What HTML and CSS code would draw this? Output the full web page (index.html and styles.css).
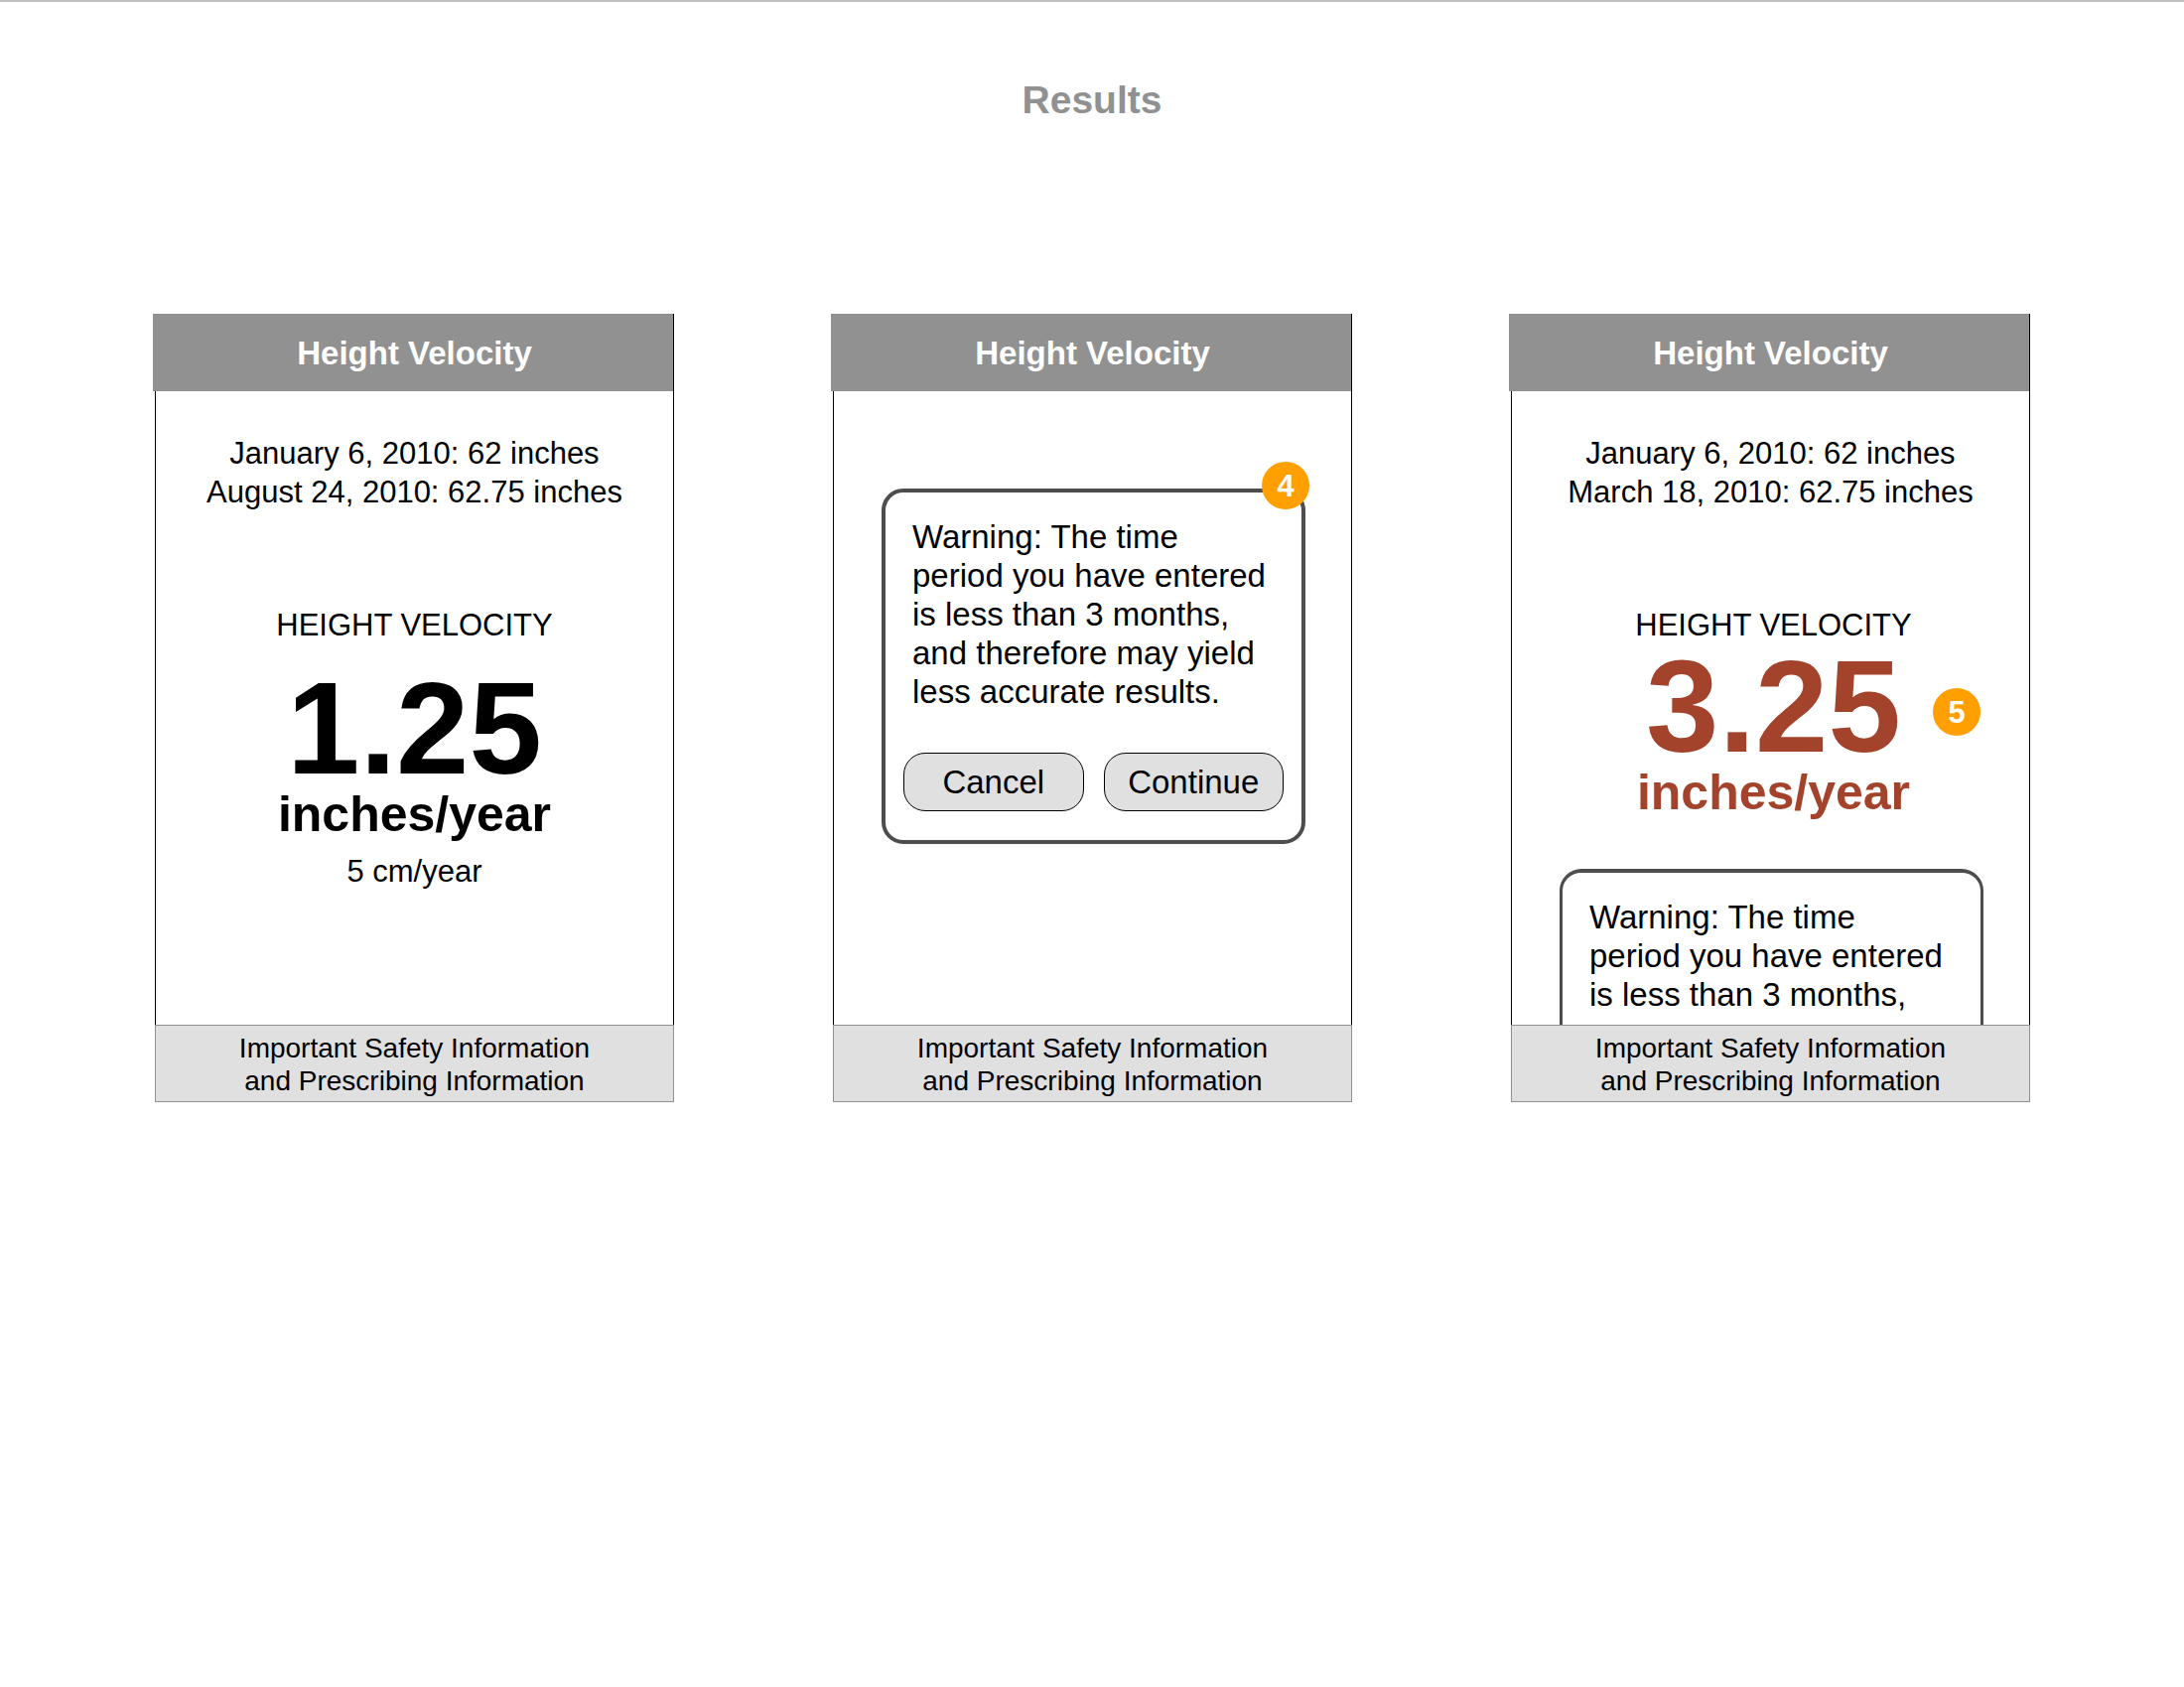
FILE: index.html
```
<!DOCTYPE html>
<html lang="en">
<head>
    <meta charset="UTF-8">
    <meta name="viewport" content="width=device-width, initial-scale=1.0">
    <title>Results</title>
    <link rel="stylesheet" href="styles.css">
</head>
<body>

    <header class="page-header">
        <h1>Results</h1>
    </header>

    <main class="screens">
        <!-- Normal result -->
        <section class="screen">
            <h2 class="screen-title">Height Velocity</h2>
            <div class="screen-body">
                <p class="dates">January 6, 2010: 62 inches<br>August 24, 2010: 62.75 inches</p>
                <div class="reading">
                    <h3>HEIGHT VELOCITY</h3>
                    <div class="value">1.25</div>
                    <div class="unit">inches/year</div>
                    <div class="metric">5 cm/year</div>
                </div>
            </div>
            <footer class="screen-footer">
                <a href="#safety">Important Safety Information<br>and Prescribing Information</a>
            </footer>
        </section>

        <!-- Warning dialog -->
        <section class="screen">
            <h2 class="screen-title">Height Velocity</h2>
            <div class="screen-body">
                <div class="dialog">
                    <p>Warning: The time<br>period you have entered<br>is less than 3 months,<br>and therefore may yield<br>less accurate results.</p>
                    <div class="dialog-buttons">
                        <button type="button">Cancel</button>
                        <button type="button">Continue</button>
                    </div>
                    <span class="badge badge-corner">4</span>
                </div>
            </div>
            <footer class="screen-footer">
                <a href="#safety">Important Safety Information<br>and Prescribing Information</a>
            </footer>
        </section>

        <!-- Result shown after the warning -->
        <section class="screen">
            <h2 class="screen-title">Height Velocity</h2>
            <div class="screen-body">
                <p class="dates">January 6, 2010: 62 inches<br>March 18, 2010: 62.75 inches</p>
                <div class="reading reading-alert">
                    <h3>HEIGHT VELOCITY</h3>
                    <div class="value">3.25</div>
                    <div class="unit">inches/year</div>
                    <span class="badge badge-side">5</span>
                </div>
                <div class="dialog dialog-peek">
                    <p>Warning: The time<br>period you have entered<br>is less than 3 months,</p>
                </div>
            </div>
            <footer class="screen-footer">
                <a href="#safety">Important Safety Information<br>and Prescribing Information</a>
            </footer>
        </section>
    </main>

</body>
</html>
```

FILE: styles.css
```
* {
    box-sizing: border-box;
}
body {
    margin: 0;
    font-family: "Liberation Sans", Arial, sans-serif;
    background-color: #fff;
    color: #000;
}
h1, h2, h3, p {
    margin: 0;
}
.page-header {
    border-top: 2px solid #c0c0c0;
    padding-top: 77px;
    text-align: center;
}
.page-header h1 {
    font-size: 39px;
    line-height: 44px;
    color: #919191;
}
.screens {
    display: grid;
    grid-template-columns: repeat(3, 1fr);
    gap: 160px;
    padding: 193px 155px 0 156px;
}
.screen {
    display: flex;
    flex-direction: column;
    border: solid #000;
    border-width: 0 1px;
}
/* the title bar hangs over the left edge of the screen */
.screen-title {
    margin-left: -3px;
    padding: 20px 0 19px 3px;
    background-color: #919191;
    color: #fff;
    font-size: 33px;
    line-height: 39px;
    text-align: center;
}
.screen-body {
    display: flex;
    flex-direction: column;
    flex: 1;
    min-height: 638px;
}
.dates {
    padding-top: 43px;
    font-size: 31px;
    line-height: 39px;
    text-align: center;
}
.reading {
    position: relative;
    margin-top: 95px;
    text-align: center;
}
.reading h3, .metric {
    font-size: 31px;
    font-weight: normal;
    line-height: 39px;
}
.value {
    margin-top: 22px;
    font-size: 132px;
    font-weight: bold;
    line-height: 126px;
}
.unit {
    font-size: 50px;
    font-weight: bold;
    line-height: 47px;
}
.metric {
    margin-top: 14px;
}
.reading-alert {
    padding-left: 6px;
}
.reading-alert .value {
    margin-top: 0;
}
.reading-alert .value, .reading-alert .unit {
    color: #a4432b;
}
.dialog {
    position: relative;
    margin: 98px 46px 0 48px;
    padding: 25px 18px 29px;
    border: 4px solid #4d4d4d;
    border-radius: 22px;
}
.dialog p {
    padding-left: 9px;
    font-size: 33px;
    line-height: 39px;
}
.dialog-buttons {
    display: flex;
    gap: 20px;
    margin-top: 42px;
}
.dialog-buttons button {
    flex: 1;
    padding: 9px 0;
    border: 1px solid #000;
    border-radius: 22px;
    background-color: #e0e0e0;
    color: #000;
    font-family: inherit;
    font-size: 33px;
    line-height: 39px;
}
/* dialog sliding out behind the footer */
.dialog-peek {
    margin-top: auto;
    padding-bottom: 11px;
    border-width: 4px 3px 0;
    border-radius: 22px 22px 0 0;
}
.badge {
    position: absolute;
    width: 48px;
    height: 48px;
    border-radius: 50%;
    background-color: #ff9f00;
    color: #fff;
    font-size: 31px;
    font-weight: bold;
    line-height: 50px;
    text-align: center;
}
.badge-corner {
    top: -31px;
    right: -8px;
}
.badge-side {
    top: 83px;
    right: 49px;
}
.screen-footer {
    margin: 0 -1px;
    padding: 6px 0 4px;
    border: 1px solid #919191;
    background-color: #e0e0e0;
    font-size: 28px;
    line-height: 33px;
    text-align: center;
}
.screen-footer a {
    color: #000;
    text-decoration: none;
}
```
